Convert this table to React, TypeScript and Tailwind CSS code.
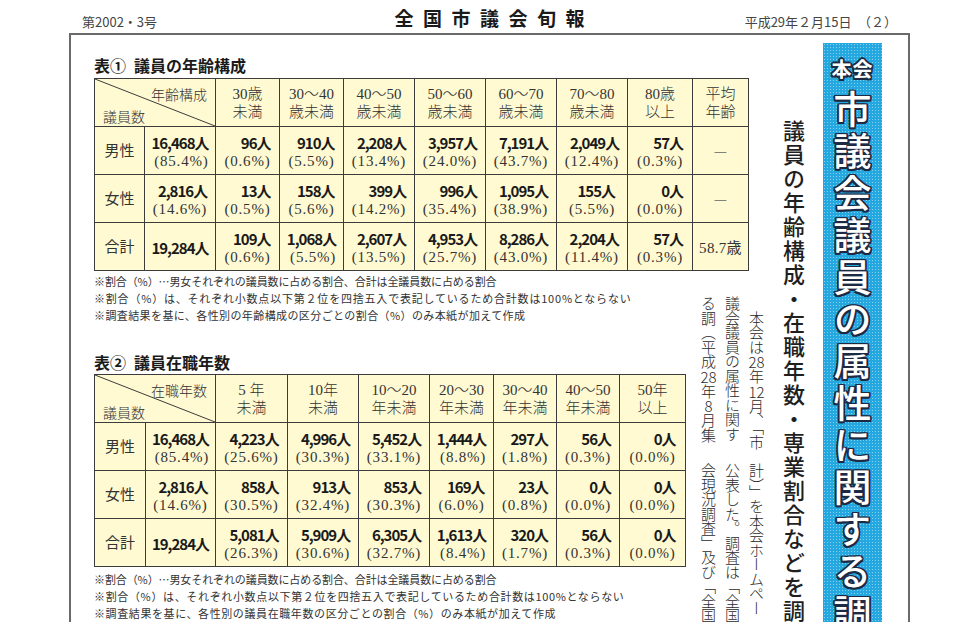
import React from 'react';

type Cell = string[] | string;

interface RowData {
    label: string;
    total: string[];
    cells: Cell[];
}

const SERIF = "font-['Liberation_Serif','Noto_Sans_CJK_JP',serif]";
const LINE = "border border-[#3c3c3c]";
const FILL = "bg-[#fffad2]";
const OUTLINE =
    "[text-shadow:-1.5px_-1.5px_0_#1d2a44,1.5px_-1.5px_0_#1d2a44,-1.5px_1.5px_0_#1d2a44,1.5px_1.5px_0_#1d2a44,0_1.8px_0_#1d2a44,0_-1.8px_0_#1d2a44,1.8px_0_0_#1d2a44,-1.8px_0_0_#1d2a44]";

const ageCols = ['w-[50px]', 'w-[71px]', 'w-[64px]', 'w-[64px]', 'w-[71px]', 'w-[71px]', 'w-[71px]', 'w-[71px]', 'w-[65px]', 'w-[56px]'];
const ageHeads = [['30歳', '未満'], ['30〜40', '歳未満'], ['40〜50', '歳未満'], ['50〜60', '歳未満'], ['60〜70', '歳未満'], ['70〜80', '歳未満'], ['80歳', '以上'], ['平均', '年齢']];
const ageRows: RowData[] = [
    {
        label: '男性',
        total: ['16,468人', '(85.4%)'],
        cells: [['96人', '(0.6%)'], ['910人', '(5.5%)'], ['2,208人', '(13.4%)'], ['3,957人', '(24.0%)'], ['7,191人', '(43.7%)'], ['2,049人', '(12.4%)'], ['57人', '(0.3%)'], '—'],
    },
    {
        label: '女性',
        total: ['2,816人', '(14.6%)'],
        cells: [['13人', '(0.5%)'], ['158人', '(5.6%)'], ['399人', '(14.2%)'], ['996人', '(35.4%)'], ['1,095人', '(38.9%)'], ['155人', '(5.5%)'], ['0人', '(0.0%)'], '—'],
    },
    {
        label: '合計',
        total: ['19,284人'],
        cells: [['109人', '(0.6%)'], ['1,068人', '(5.5%)'], ['2,607人', '(13.5%)'], ['4,953人', '(25.7%)'], ['8,286人', '(43.0%)'], ['2,204人', '(11.4%)'], ['57人', '(0.3%)'], '58.7歳'],
    },
];

const termCols = ['w-[51px]', 'w-[70px]', 'w-[72px]', 'w-[71px]', 'w-[71px]', 'w-[64px]', 'w-[63px]', 'w-[63px]', 'w-[66px]'];
const termHeads = [['5 年', '未満'], ['10年', '未満'], ['10〜20', '年未満'], ['20〜30', '年未満'], ['30〜40', '年未満'], ['40〜50', '年未満'], ['50年', '以上']];
const termRows: RowData[] = [
    {
        label: '男性',
        total: ['16,468人', '(85.4%)'],
        cells: [['4,223人', '(25.6%)'], ['4,996人', '(30.3%)'], ['5,452人', '(33.1%)'], ['1,444人', '(8.8%)'], ['297人', '(1.8%)'], ['56人', '(0.3%)'], ['0人', '(0.0%)']],
    },
    {
        label: '女性',
        total: ['2,816人', '(14.6%)'],
        cells: [['858人', '(30.5%)'], ['913人', '(32.4%)'], ['853人', '(30.3%)'], ['169人', '(6.0%)'], ['23人', '(0.8%)'], ['0人', '(0.0%)'], ['0人', '(0.0%)']],
    },
    {
        label: '合計',
        total: ['19,284人'],
        cells: [['5,081人', '(26.3%)'], ['5,909人', '(30.6%)'], ['6,305人', '(32.7%)'], ['1,613人', '(8.4%)'], ['320人', '(1.7%)'], ['56人', '(0.3%)'], ['0人', '(0.0%)']],
    },
];

// each note line carries its own spacing, the paper justifies them differently
const ageNotes = [
    { text: '※割合（%）…男女それぞれの議員数に占める割合、合計は全議員数に占める割合', cls: 'tracking-[-0.1px]' },
    { text: '※割合（%）は、それぞれ小数点以下第２位を四捨五入で表記しているため合計数は100%とならない', cls: 'tracking-[0.8px]' },
    { text: '※調査結果を基に、各性別の年齢構成の区分ごとの割合（%）のみ本紙が加えて作成', cls: 'tracking-[0.4px]' },
];
const termNotes = [
    { text: '※割合（%）…男女それぞれの議員数に占める割合、合計は全議員数に占める割合', cls: 'tracking-[-0.1px]' },
    { text: '※割合（%）は、それぞれ小数点以下第２位を四捨五入で表記しているため合計数は100%とならない', cls: 'tracking-[0.65px]' },
    { text: '※調査結果を基に、各性別の議員在職年数の区分ごとの割合（%）のみ本紙が加えて作成', cls: 'tracking-[0.6px]' },
];

function Count({ pair }: { pair: string[] }) {
    return (
        <div className="inline-flex flex-col items-end">
            <span className="text-[15px] leading-[19px] font-bold tracking-[-1px] text-[#1a1a1a]">{pair[0]}</span>
            {pair[1] && (
                <span className={`${SERIF} text-[15px] leading-[19px] tracking-[0.8px] text-[#333]`}>{pair[1]}</span>
            )}
        </div>
    );
}

function StatTable({ width, cols, corner, heads, rows }: {
    width: string;
    cols: string[];
    corner: string;
    heads: string[][];
    rows: RowData[];
}) {
    return (
        <table className={`${width} table-fixed border-collapse ${FILL}`}>
            <colgroup>
                {cols.map((c, i) => <col key={i} className={c} />)}
            </colgroup>
            <thead>
                <tr className="h-[48px]">
                    <th colSpan={2} className={`${LINE} relative p-0 font-normal`}>
                        <svg className="absolute inset-0 h-full w-full" viewBox="0 0 100 100" preserveAspectRatio="none">
                            <line x1="0" y1="0" x2="100" y2="100" stroke="#3c3c3c" strokeWidth="1" vectorEffect="non-scaling-stroke" />
                        </svg>
                        <div className="flex h-[46px] flex-col justify-between px-[8px] pt-[5px] pb-[1px] text-[14px] leading-[18px] font-light text-[#333]">
                            <span className="self-end">{corner}</span>
                            <span className="self-start">議員数</span>
                        </div>
                    </th>
                    {heads.map((h, i) => (
                        <th key={i} className={`${LINE} p-0 text-center font-light text-[15px] leading-[18px] text-[#333] ${SERIF}`}>
                            <div>{h[0]}</div>
                            <div>{h[1]}</div>
                        </th>
                    ))}
                </tr>
            </thead>
            <tbody>
                {rows.map((r) => (
                    <tr key={r.label} className="h-[48px]">
                        <td className={`${LINE} p-0 text-center text-[15px] text-[#333]`}>{r.label}</td>
                        <td className={`${LINE} p-0 text-center`}>
                            <Count pair={r.total} />
                        </td>
                        {r.cells.map((c, i) => (
                            <td key={i} className={`${LINE} p-0 text-center`}>
                                {typeof c === 'string' ? (
                                    c === '—' ? (
                                        <span className="font-light text-[15px] text-[#666]">—</span>
                                    ) : (
                                        <span className={`${SERIF} text-[15px] tracking-[0.3px] text-[#333]`}>{c}</span>
                                    )
                                ) : (
                                    <Count pair={c} />
                                )}
                            </td>
                        ))}
                    </tr>
                ))}
            </tbody>
        </table>
    );
}

function Notes({ lines, className }: { lines: { text: string; cls: string }[]; className: string }) {
    return (
        <div className={`${className} text-[11px] leading-[17px] text-[#333] whitespace-nowrap`}>
            {lines.map((l) => <p key={l.text} className={l.cls}>{l.text}</p>)}
        </div>
    );
}

function Tcy({ children }: { children: React.ReactNode }) {
    return <span className="[text-combine-upright:all]">{children}</span>;
}

export default function App() {
    return (
        <div className="h-[622px] w-[960px] overflow-hidden bg-white font-['Noto_Sans_CJK_JP',sans-serif] text-[#222]">
            <div className="ml-[69px] flex h-full w-[841px] flex-col">
                {/* masthead */}
                <header className="grid h-[33px] shrink-0 grid-cols-[1fr_auto_1fr] items-end px-[13px] pb-[3px]">
                    <span className="text-[13px] leading-[16px] text-[#444]">第2002・3号</span>
                    <span className="mr-[-9.5px] text-[19px] leading-[24px] font-bold tracking-[9.5px] text-[#1a1a1a]">全国市議会旬報</span>
                    <span className="justify-self-end text-[13px] leading-[16px] text-[#444]">平成29年２月15日　（２）</span>
                </header>

                <div className="flex flex-1 overflow-hidden border-x-2 border-t-2 border-[#6a6a6a]">
                    {/* tables */}
                    <div className="ml-[23px] w-[674px] shrink-0 pt-[20px]">
                        <h2 className="mb-[3px] text-[16px] leading-[20px] font-bold text-[#1a1a1a]">
                            表①<span className="ml-[8px]">議員の年齢構成</span>
                        </h2>
                        <StatTable width="w-[654px]" cols={ageCols} corner="年齢構成" heads={ageHeads} rows={ageRows} />

                        <div className="flex items-start">
                            <div className="w-[591px] shrink-0">
                                <Notes className="mt-[2px]" lines={ageNotes} />
                                <h2 className="mt-[28px] mb-[2px] text-[16px] leading-[20px] font-bold text-[#1a1a1a]">
                                    表②<span className="ml-[8px]">議員在職年数</span>
                                </h2>
                                <StatTable width="w-[591px]" cols={termCols} corner="在職年数" heads={termHeads} rows={termRows} />
                                <Notes className="mt-[4px]" lines={termNotes} />
                            </div>

                            {/* article body */}
                            <div className="ml-[11px] w-[72px] shrink-0 pt-[25px] text-[15px] font-light text-[#2a2a2a]">
                                <div className="h-[148px] whitespace-nowrap leading-[24px] tracking-[-0.5px] [writing-mode:vertical-rl]">
                                    <span className="block">　本会は<Tcy>28</Tcy>年<Tcy>12</Tcy>月、「市</span>
                                    <span className="block">議会議員の属性に関す</span>
                                    <span className="block">る調（平成<Tcy>28</Tcy>年<Tcy>8</Tcy>月集</span>
                                </div>
                                <div className="mt-[19px] h-[160px] whitespace-nowrap leading-[24px] tracking-[-0.5px] [writing-mode:vertical-rl]">
                                    <span className="block">計）」を本会ホームペー</span>
                                    <span className="block">公表した。調査は「全国</span>
                                    <span className="block">会現況調査」及び「全国</span>
                                </div>
                            </div>
                        </div>
                    </div>

                    {/* headline */}
                    <div className="ml-[14px] w-[24px] shrink-0 pt-[85px]">
                        <div className="h-[500px] whitespace-nowrap text-[22px] leading-[24px] font-medium tracking-[2px] text-[#1f1f1f] [writing-mode:vertical-rl]">
                            議員の年齢構成・在職年数・専業割合などを調
                        </div>
                    </div>

                    {/* banner */}
                    <div className="mt-[8px] ml-[17px] flex w-[59px] shrink-0 flex-col items-center bg-[#25a8e0] bg-[radial-gradient(rgba(255,255,255,0.45)_0.7px,transparent_0.9px)] bg-[length:3px_3px]">
                        <div className={`mt-[15px] text-[20px] leading-[22px] font-bold tracking-[1px] text-white ${OUTLINE}`}>本会</div>
                        <div className={`mt-[10px] h-[520px] whitespace-nowrap text-[38px] leading-[59px] font-medium tracking-[4px] text-white [writing-mode:vertical-rl] ${OUTLINE}`}>
                            市議会議員の属性に関する調
                        </div>
                    </div>
                </div>
            </div>
        </div>
    );
}
